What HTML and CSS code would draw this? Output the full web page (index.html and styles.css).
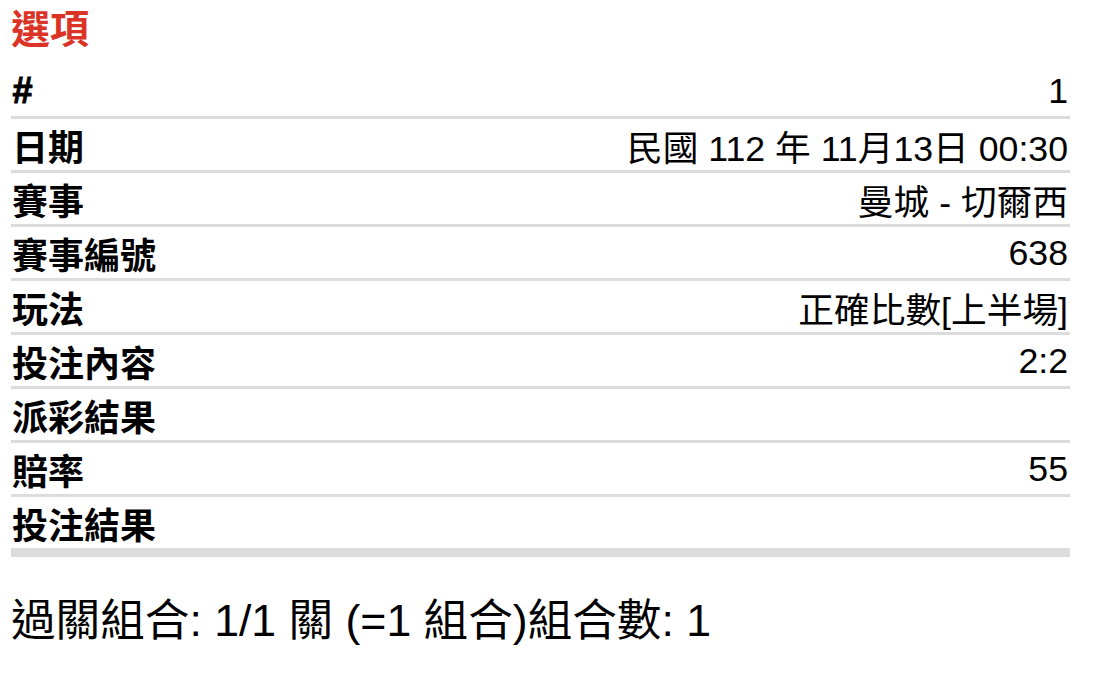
FILE: index.html
```html
<!DOCTYPE html>
<html lang="zh-Hant">
<head>
<meta charset="utf-8">
<title>選項</title>
<link rel="stylesheet" href="styles.css">
</head>
<body>
<div class="page">
  <h2 class="title">選項</h2>
  <div class="table">
    <div class="row"><span class="label label-hash">#</span><span class="value">1</span></div>
    <div class="row"><span class="label">日期</span><span class="value">民國 112 年 11月13日 00:30</span></div>
    <div class="row"><span class="label">賽事</span><span class="value">曼城 - 切爾西</span></div>
    <div class="row"><span class="label">賽事編號</span><span class="value">638</span></div>
    <div class="row"><span class="label">玩法</span><span class="value">正確比數[上半場]</span></div>
    <div class="row"><span class="label">投注內容</span><span class="value">2:2</span></div>
    <div class="row"><span class="label">派彩結果</span><span class="value"></span></div>
    <div class="row"><span class="label">賠率</span><span class="value">55</span></div>
    <div class="row row-last"><span class="label">投注結果</span><span class="value"></span></div>
  </div>
  <p class="summary">過關組合: 1/1 關 (=1 組合)組合數: 1</p>
</div>
</body>
</html>
```
FILE: styles.css
```css
html, body {
  margin: 0;
  padding: 0;
  background: #ffffff;
}

body {
  font-family: "Liberation Sans", "Noto Sans CJK TC", sans-serif;
  color: #000000;
}

.page {
  width: 1059px;
  padding-left: 11px;
}

.title {
  margin: 0;
  height: 65px;
  line-height: 60px;
  font-size: 39px;
  font-weight: 700;
  color: #db3326;
}

.table {
  display: flex;
  flex-direction: column;
}

.row {
  display: flex;
  align-items: center;
  justify-content: space-between;
  height: 51px;
  border-bottom: 3px solid #dcdcdc;
  font-size: 36px;
  padding-right: 2px;
}

.row-last {
  border-bottom-width: 9px;
}

.label {
  font-weight: 700;
  padding-left: 1px;
}

.label-hash {
  font-style: italic;
  -webkit-text-stroke: 1px #000000;
}

.value {
  font-weight: 400;
  font-size: 35.7px;
  padding-top: 1px;
}

.summary {
  margin: 38px 0 0 0;
  font-size: 44.6px;
  line-height: 52px;
}
```
